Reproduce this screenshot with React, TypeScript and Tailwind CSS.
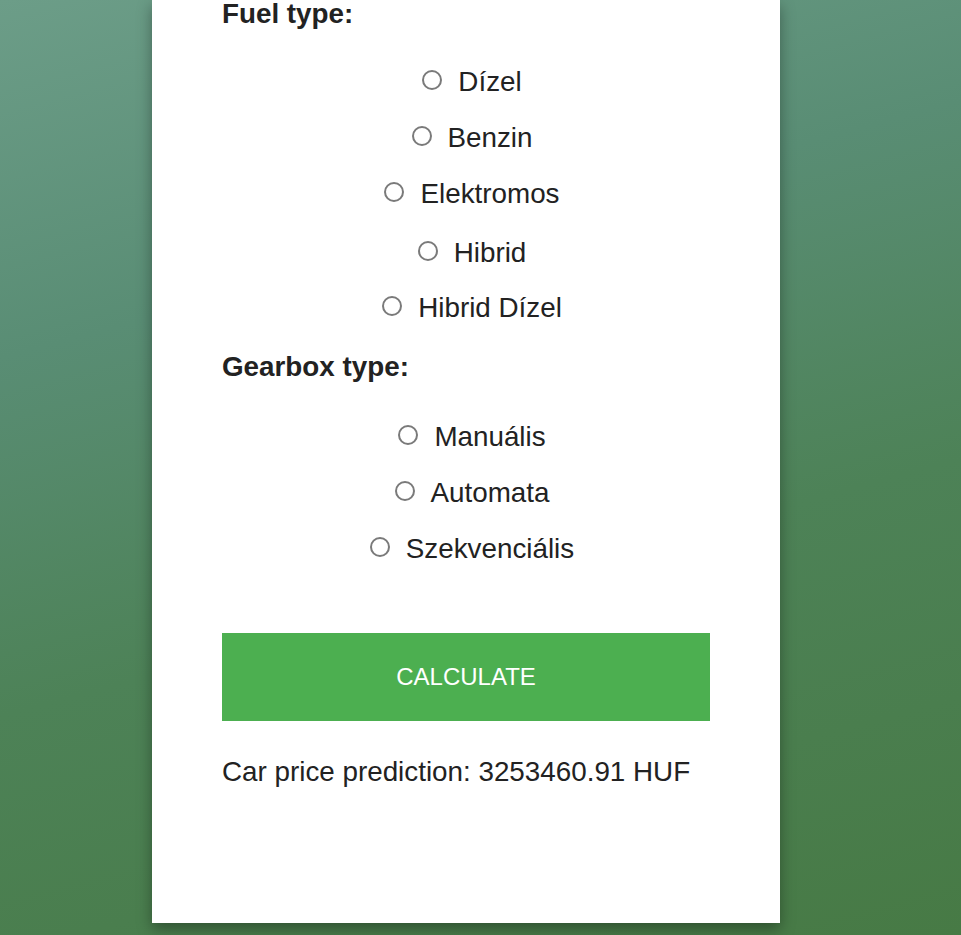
const FUEL_OPTIONS = [
  { label: "Dízel", shift: "" },
  { label: "Benzin", shift: "" },
  { label: "Elektromos", shift: "" },
  { label: "Hibrid", shift: "mt-[3px]" },
  { label: "Hibrid Dízel", shift: "-mt-[1px]" },
];

const GEARBOX_OPTIONS = ["Manuális", "Automata", "Szekvenciális"];

function RadioRow({ name, label, className = "" }: { name: string; label: string; className?: string }) {
  return (
    <label className={`flex h-[56px] items-center justify-center gap-[16px] pl-[12px] ${className}`}>
      <input
        type="radio"
        name={name}
        value={label}
        className="h-[20px] w-[20px] -translate-y-[2px] appearance-none rounded-full border-2 border-[#7a7a7a] bg-white"
      />
      <span>{label}</span>
    </label>
  );
}

export default function App() {
  return (
    <div className="flex min-h-[935px] justify-center bg-[linear-gradient(165deg,#6c9d88_0%,#598d74_30%,#4d8257_60%,#477a45_100%)] font-['Liberation_Sans',Arial,sans-serif] text-[27.8px] leading-[28px] text-[#222]">
      <div className="mb-[13px] ml-[-29px] flex w-[628px] flex-col bg-white px-[70px] pb-[137px] shadow-[0_6px_14px_rgba(0,0,0,0.35)]">
        <h2 className="h-[28px] font-bold">Fuel type:</h2>
        <div className="mt-[26px] flex flex-col">
          {FUEL_OPTIONS.map((option) => (
            <RadioRow key={option.label} name="fuel" label={option.label} className={option.shift} />
          ))}
        </div>

        <h2 className="mt-[17px] h-[28px] font-bold">Gearbox type:</h2>
        <div className="mt-[28px] flex flex-col">
          {GEARBOX_OPTIONS.map((option) => (
            <RadioRow key={option} name="gearbox" label={option} />
          ))}
        </div>

        <button
          type="button"
          className="mt-[56px] h-[88px] w-full bg-[#4caf50] text-[24px] text-white"
        >
          CALCULATE
        </button>

        <p className="mt-[37px]">Car price prediction: 3253460.91 HUF</p>
      </div>
    </div>
  );
}
